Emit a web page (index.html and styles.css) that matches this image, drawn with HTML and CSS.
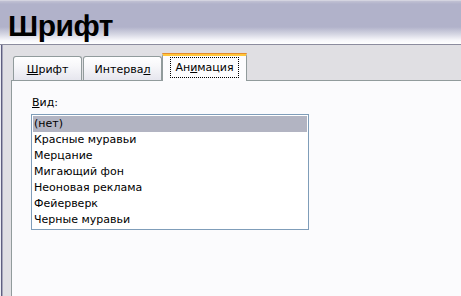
FILE: index.html
```html
<!DOCTYPE html>
<html lang="ru">
<head>
<meta charset="utf-8">
<title>Шрифт</title>
<link rel="stylesheet" href="styles.css">
</head>
<body>
<div class="title">Шрифт</div>
<div class="frame">
  <div class="tabs">
    <div class="tab tab-font"><span class="tab-label"><u>Ш</u>рифт</span></div>
    <div class="tab tab-spacing"><span class="tab-label">Интерва<u>л</u></span></div>
    <div class="tab tab-anim active"><span class="tab-label focus">Ан<u>и</u>мация</span></div>
  </div>
  <div class="panel">
    <div class="label"><u>В</u>ид:</div>
    <div class="listbox">
      <div class="item selected">(нет)</div>
      <div class="item">Красные муравьи</div>
      <div class="item">Мерцание</div>
      <div class="item">Мигающий фон</div>
      <div class="item">Неоновая реклама</div>
      <div class="item">Фейерверк</div>
      <div class="item">Черные муравьи</div>
    </div>
  </div>
</div>
</body>
</html>
```

FILE: styles.css
```css
html, body {
  margin: 0;
  padding: 0;
}
body {
  width: 461px;
  height: 296px;
  overflow: hidden;
  display: flex;
  flex-direction: column;
  font-family: "DejaVu Sans", "Liberation Sans", sans-serif;
  font-size: 11px;
  color: #000;
  background: #e0dfe3;
}
u {
  text-decoration: underline;
  text-underline-offset: 1px;
}
.title {
  height: 40px;
  padding: 4px 0 0 8px;
  line-height: 44px;
  font-family: "Liberation Sans", Arial, sans-serif;
  font-size: 30px;
  font-weight: bold;
  letter-spacing: -0.5px;
  color: #000;
  border-bottom: 1px solid #8c8c9e;
  background: linear-gradient(to bottom, #e6e6ec 0, #c2c2d4 1px, #b1b2ca 4px, #b1b2ca 27px, #d4d5e2 34px, #f6f6fa 40px, #ffffff 44px);
}
.frame {
  flex: 1;
  display: flex;
  flex-direction: column;
  padding-left: 11px;
  background: linear-gradient(to right, #ececf2 0, #ececf2 1px, #5f5f80 1px, #5f5f80 2px, #a7a7bb 2px, #a7a7bb 3px, #e0dfe3 3px);
}
.tabs {
  position: relative;
  z-index: 1;
  display: flex;
  align-items: flex-end;
  margin-top: 8px;
  margin-bottom: -1px;
  padding-left: 2px;
}
.tab {
  box-sizing: border-box;
  height: 24px;
  margin-bottom: 1px;
  display: flex;
  align-items: center;
  justify-content: center;
  border: 1px solid #919b9c;
  border-bottom: none;
  border-radius: 3px 3px 0 0;
  background: linear-gradient(to bottom, #ffffff 0, #f7f7fa 40%, #e6e6ee 100%);
  padding-top: 1px;
}
.tab-font {
  width: 69px;
}
.tab-spacing {
  width: 79px;
  margin-left: 1px;
}
.tab-anim {
  width: 85px;
}
.tab.active {
  height: 28px;
  margin-bottom: 0;
  border-top: 3px solid #ffc73c;
  background: #fcfcfe;
  position: relative;
  padding-top: 0;
  padding-bottom: 2px;
}
.tab.active::before {
  content: "";
  position: absolute;
  left: -1px;
  right: -1px;
  top: -3px;
  height: 1px;
  background: #e68b2c;
  border-radius: 3px 3px 0 0;
}
.tab-label {
  line-height: 15px;
}
.focus {
  padding: 2px 4px;
  border: 1px dotted #000;
}
.panel {
  flex: 1;
  background: #fbfbfd;
  border-left: 1px solid #919b9c;
  border-top: 1px solid #919b9c;
  padding: 15px 0 0 19px;
}
.label {
  line-height: 14px;
  margin-left: 1px;
  margin-bottom: 4px;
}
.listbox {
  box-sizing: border-box;
  width: 278px;
  padding: 1px;
  border: 1px solid #7f9db9;
  background: #ffffff;
}
.item {
  height: 16px;
  line-height: 16px;
  padding-left: 1px;
  white-space: nowrap;
}
.item.selected {
  background: #b2b4c2;
}
```
